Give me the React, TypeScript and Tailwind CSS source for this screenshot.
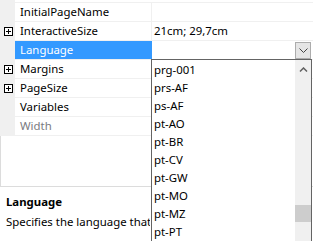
const rows = [
  { name: 'InitialPageName', value: '', plus: false },
  { name: 'InteractiveSize', value: '21cm; 29,7cm', plus: true },
  { name: 'Language', value: '', plus: false, selected: true },
  { name: 'Margins', value: '', plus: true },
  { name: 'PageSize', value: '', plus: true },
  { name: 'Variables', value: '', plus: false },
  { name: 'Width', value: '', plus: false, disabled: true },
];

const items = ['prg-001', 'prs-AF', 'ps-AF', 'pt-AO', 'pt-BR', 'pt-CV', 'pt-GW', 'pt-MO', 'pt-MZ', 'pt-PT'];

function PlusBox() {
  return (
    <svg width="9" height="9" viewBox="0 0 9 9" className="block">
      <rect x="0.5" y="0.5" width="8" height="8" fill="#fff" stroke="#000" />
      <path d="M2 4.5h5M4.5 2v5" stroke="#000" />
    </svg>
  );
}

export default function App() {
  return (
    <div
      className="relative w-[313px] h-[241px] overflow-hidden bg-white text-[11.4px] text-black"
      style={{ fontFamily: '"Noto Sans", "Open Sans", sans-serif' }}
    >
      {/* grid rows */}
      <div className="flex flex-col">
        <div className="flex h-[3px]">
          <div className="w-[15px] bg-[#f0f0f0]" />
          <div className="flex-1 border-b border-[#f0f0f0]" />
        </div>
        {rows.map((r) => (
          <div key={r.name} className="flex h-[19px]">
            <div className="w-[15px] bg-[#f0f0f0] flex items-center justify-center pl-[1px]">
              {r.plus && <PlusBox />}
            </div>
            <div
              className={
                'w-[136px] h-full flex items-center pl-[5px] border-b border-[#f0f0f0] ' +
                (r.selected ? 'bg-[#3399ff] text-white border-[#3399ff]' : '') +
                (r.disabled ? ' text-[#7a7a80]' : '')
              }
            >
              <span className="leading-none whitespace-nowrap">{r.name}</span>
            </div>
            <div
              className={
                'flex-1 h-full flex items-center pl-[2px] border-b border-[#f0f0f0] border-l ' +
                (r.selected ? 'border-l-[#3399ff]' : 'border-l-[#f0f0f0]')
              }
            >
              <span className="leading-none whitespace-nowrap">{r.value}</span>
              {r.selected && (
                <div className="ml-auto mr-[2px] w-[16px] h-[17px] bg-[#e5e5e5] border border-[#acacac] flex items-center justify-center">
                  <svg width="9" height="5" viewBox="0 0 9 5">
                    <path d="M0.5 0.5l4 4 4-4" fill="none" stroke="#444" />
                  </svg>
                </div>
              )}
            </div>
          </div>
        ))}
        <div className="h-[51px] border-b border-[#dcdcdc] border-l border-l-[#dcdcdc]" />
      </div>

      {/* description */}
      <div className="w-[150px] overflow-hidden pl-[6px] pt-[6px] flex flex-col gap-[2px]">
        <div className="font-bold leading-[18px]">Language</div>
        <div className="leading-[18px] whitespace-nowrap">Specifies the language that</div>
      </div>

      {/* dropdown list */}
      <div className="absolute left-[151px] top-[59px] w-[161px] h-[200px] bg-white border border-[#646464] flex">
        <div className="flex-1 flex flex-col pt-[1px]">
          {items.map((it) => (
            <div key={it} className="h-[18px] flex items-center pl-[2px] leading-none whitespace-nowrap">
              {it}
            </div>
          ))}
        </div>
        <div className="w-[16px] bg-[#f0f0f0] flex flex-col">
          <div className="h-[17px] flex items-center justify-center pt-[1px]">
            <svg width="9" height="5" viewBox="0 0 9 5">
              <path d="M1 4.5l3.5-3.5 3.5 3.5" fill="none" stroke="#606060" strokeWidth="1.5" />
            </svg>
          </div>
          <div className="mt-[128px] h-[17px] bg-[#cdcdcd]" />
        </div>
      </div>
    </div>
  );
}
